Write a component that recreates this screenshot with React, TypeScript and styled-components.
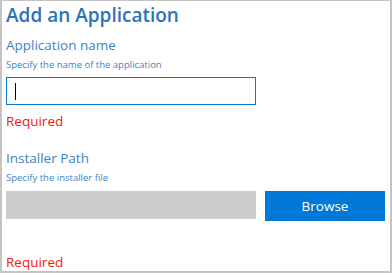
import styled, { createGlobalStyle } from "styled-components";

const GlobalStyle = createGlobalStyle`
  html, body {
    margin: 0;
    padding: 0;
    background: #ffffff;
  }
  body {
    font-family: "Open Sans", "Noto Sans", sans-serif;
  }
`;

const Panel = styled.div`
  box-sizing: border-box;
  width: 392px;
  height: 273px;
  border: 2px solid #c4c4c4;
  border-top-width: 1px;
  padding: 0 4px;
  display: flex;
  flex-direction: column;
`;

const Title = styled.h1`
  margin: 1px 0 0;
  font-size: 19px;
  line-height: 26px;
  font-weight: 600;
  color: #2b73b9;
`;

const Label = styled.div<{ $top: number }>`
  margin-top: ${(p) => p.$top}px;
  font-size: 13.5px;
  line-height: 18px;
  color: #3d82c4;
`;

const Hint = styled.div`
  margin-top: 4px;
  font-size: 9.5px;
  line-height: 13px;
  color: #3d82c4;
`;

const TextInput = styled.div`
  box-sizing: border-box;
  margin-top: 6px;
  width: 250px;
  height: 28px;
  border: 1px solid #0b78d0;
  display: flex;
  align-items: center;
  padding-left: 8px;
`;

const Caret = styled.span`
  width: 1px;
  height: 17px;
  background: #000;
`;

const Error = styled.div<{ $top: number }>`
  margin-top: ${(p) => p.$top}px;
  font-size: 13.5px;
  line-height: 18px;
  color: #f01a1a;
`;

const FileRow = styled.div`
  margin-top: 7px;
  display: flex;
  align-items: flex-start;
  gap: 9px;
`;

const PathBox = styled.div`
  width: 250px;
  height: 28px;
  background: #cccccc;
`;

const BrowseButton = styled.button`
  width: 120px;
  height: 30px;
  border: none;
  background: #0078d7;
  color: #ffffff;
  font-family: "Open Sans", "Noto Sans", sans-serif;
  font-size: 13.5px;
  padding: 0;
`;

export default function App() {
  return (
    <>
      <GlobalStyle />
      <Panel>
        <Title>Add an Application</Title>
        <Label $top={8}>Application name</Label>
        <Hint>Specify the name of the application</Hint>
        <TextInput>
          <Caret />
        </TextInput>
        <Error $top={7}>Required</Error>
        <Label $top={19}>Installer Path</Label>
        <Hint>Specify the installer file</Hint>
        <FileRow>
          <PathBox />
          <BrowseButton>Browse</BrowseButton>
        </FileRow>
        <Error $top={32}>Required</Error>
      </Panel>
    </>
  );
}
